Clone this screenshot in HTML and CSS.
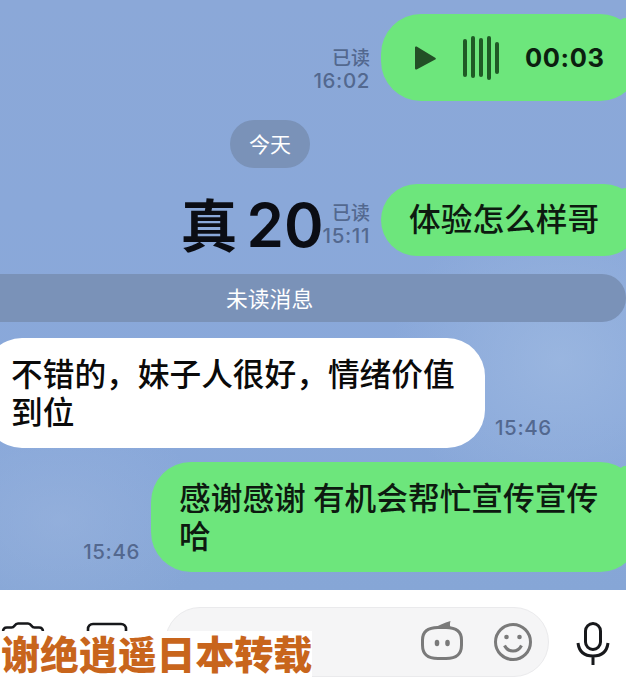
FILE: index.html
```html
<!DOCTYPE html>
<html lang="zh">
<head>
<meta charset="utf-8">
<title>聊天</title>
<link rel="stylesheet" href="styles.css">
</head>
<body>
<div class="screen">
  <main class="chat">
    <div class="row row-out row-voice">
      <div class="meta"><span>已读</span><span>16:02</span></div>
      <div class="bubble bubble-out voice">
        <svg class="play" viewBox="0 0 24 26"><path d="M2 2.500v21c0 1 .8 1.300 1.600.9l18.600-9.900c.9-.5.9-1.300 0-1.800L3.600 1.600C2.800 1.200 2 1.500 2 2.500z"/></svg>
        <svg class="wave" viewBox="0 0 38 44"><rect x="0" y="3" width="4" height="38" rx="2"/><rect x="8" y="0" width="4" height="42" rx="2"/><rect x="16" y="2" width="4" height="39" rx="2"/><rect x="24" y="0" width="4" height="44" rx="2"/><rect x="32" y="6" width="4" height="32" rx="2"/></svg>
        <span class="duration">00:03</span>
      </div>
    </div>
    <div class="date-row"><span class="date-pill">今天</span></div>
    <div class="row row-out row-text">
      <div class="big"><span class="big-cjk">真</span> 20</div>
      <div class="meta meta-overlap"><span>已读</span><span>15:11</span></div>
      <div class="bubble bubble-out single">体验怎么样哥</div>
    </div>
    <div class="unread"><span>未读消息</span></div>
    <div class="row row-in">
      <div class="bubble bubble-in">不错的，妹子人很好，情绪价值到位</div>
      <div class="time">15:46</div>
    </div>
    <div class="row row-out row-long">
      <div class="time">15:46</div>
      <div class="bubble bubble-out long">感谢感谢 有机会帮忙宣传宣传哈</div>
    </div>
  </main>
  <footer class="composer">
    <svg class="tool tool-camera" viewBox="0 0 46 40"><path d="M3 38V10c0-3 1.500-4.500 4-4.500h4.500c1.500 0 2.200-.6 3-1.800C15.500 2.200 16.500 1.500 18 1.500h10c1.500 0 2.500.7 3.500 2.200.8 1.200 1.500 1.800 3 1.800H39c2.500 0 4 1.500 4 4.500v28"/></svg>
    <svg class="tool tool-image" viewBox="0 0 42 40"><path d="M2 38V7c0-3 2-5 5-5h28c3 0 5 2 5 5v31"/></svg>
    <div class="input">
      <svg class="face face-bot" viewBox="0 0 44 42"><path d="M18 7.500h8c11 0 15.500 4.500 15.500 12.500v5c0 9-4.500 13.500-15.500 13.500h-8C7 38.500 2.500 34 2.500 25v-5C2.500 12 7 7.500 18 7.500z"/><path class="fill" d="M14 8C19 5 24 3 30.500 1c-.8 2.500-.8 5 .5 7.500z"/><ellipse class="fill" cx="17" cy="23" rx="2.300" ry="3.300"/><ellipse class="fill" cx="27.500" cy="23" rx="2.300" ry="3.300"/></svg>
      <svg class="face face-smile" viewBox="0 0 40 40"><circle cx="20" cy="20" r="17.500"/><circle class="fill" cx="13.500" cy="15" r="2.300"/><circle class="fill" cx="26.500" cy="15" r="2.300"/><path d="M11.500 23.500c2 4 5 5.500 8.500 5.500s6.500-1.500 8.500-5.500"/></svg>
    </div>
    <svg class="mic" viewBox="0 0 36 44"><rect x="10.500" y="1.500" width="15" height="26" rx="7.500"/><path d="M3 21c1 8 6 13 15 13s14-5 15-13M18 34v9"/></svg>
    <div class="watermark">谢绝逍遥日本转载</div>
  </footer>
</div>
</body>
</html>
```
FILE: styles.css
```css
* { box-sizing: border-box; }
html, body { margin: 0; padding: 0; background: #fff; }
body {
  font-family: Inter, "Noto Sans CJK SC", "Noto Sans", sans-serif;
  overflow: hidden;
}
.screen {
  position: relative;
  width: 626px;
  height: 692px;
  overflow: hidden;
  display: flex;
  flex-direction: column;
}
.chat {
  height: 590px;
  flex: none;
  padding-top: 14px;
  display: flex;
  flex-direction: column;
  background:
    radial-gradient(ellipse 170px 150px at 560px 360px, rgba(160,187,226,.7), transparent),
    radial-gradient(ellipse 150px 110px at 60px 520px, rgba(154,180,222,.6), transparent),
    linear-gradient(180deg, #8ba8d8 0%, #89a8da 70%, #86a6d6 100%);
}
.row { display: flex; align-items: flex-end; }
.row-out { justify-content: flex-end; margin-right: -14px; }
.bubble {
  font-family: "Noto Sans CJK SC", sans-serif;
  font-weight: 500;
  font-size: 31.700px;
  line-height: 38px;
  color: #0d1a10;
}
.bubble-out { background: #6de67c; border-radius: 40px; position: relative; }
.bubble-out::after {
  content: "";
  position: absolute;
  top: 4px;
  right: 14px;
  width: 6px;
  height: 10px;
  background: #6de67c;
  border-radius: 5px 0 0 0;
}
.voice {
  width: 259px;
  height: 87px;
  display: flex;
  align-items: center;
  padding-left: 32px;
}
.play { width: 24px; height: 26px; fill: #234f26; flex: none; }
.wave { width: 38px; height: 44px; fill: #1f5b25; margin-left: 26px; flex: none; }
.duration {
  font-family: Inter, sans-serif;
  font-weight: 700;
  font-size: 25.500px;
  letter-spacing: .6px;
  margin-left: 24px;
  color: #0c1f10;
}
.meta {
  display: flex;
  flex-direction: column;
  align-items: flex-end;
  font-size: 20.500px;
  font-weight: 500;
  letter-spacing: .6px;
  line-height: 24px;
  color: #53688f;
  margin: 0 11px 8px 0;
}
.meta span:first-child { font-family: "Noto Sans CJK SC", sans-serif; font-size: 19px; letter-spacing: 0; }
.date-row { display: flex; justify-content: center; margin: 19px 0 16px; padding-right: 86px; }
.date-pill {
  width: 80px;
  height: 48px;
  border-radius: 24px;
  background: #7a92b8;
  color: #fff;
  font-family: "Noto Sans CJK SC", sans-serif;
  font-size: 21px;
  padding-bottom: 2px;
  display: flex;
  align-items: center;
  justify-content: center;
}
.row-text { height: 72px; align-items: center; }
.big {
  color: #0b0d14;
  font-size: 60px;
  line-height: 72px;
  height: 72px;
  padding-top: 2px;
  font-weight: 600;
  white-space: nowrap;
  word-spacing: -6px;
  margin: 0 -1px 0 0;
}
.big-cjk { font-family: "Noto Sans CJK SC", sans-serif; font-weight: 700; font-size: 57px; }
.single {
  width: 259px;
  height: 72px;
  padding: 14px 0 0 28px;
}
.meta-overlap { align-self: flex-end; margin-bottom: 8px; position: relative; }
.unread {
  margin: 18px 0 16px;
  height: 48px;
  border-radius: 0 24px 24px 0;
  background: #7a92b8;
  color: #fff;
  font-family: "Noto Sans CJK SC", sans-serif;
  font-size: 21.800px;
  padding-left: 226px;
  padding-bottom: 2px;
  display: flex;
  align-items: center;
}
.row-in { margin-left: -16px; }
.bubble-in {
  width: 501px;
  height: 110px;
  background: #fff;
  border-radius: 38px;
  padding: 15px 18px 0 27px;
  color: #0a0a0a;
}
.time {
  font-size: 20.500px;
  font-weight: 500;
  letter-spacing: .6px;
  line-height: 24px;
  color: #53688f;
  padding-bottom: 8px;
}
.row-in .time { margin-left: 10px; }
.row-long { margin-top: 14px; }
.row-long .time { margin-right: 11px; }
.long {
  width: 489px;
  height: 110px;
  padding: 15px 28px 0 28px;
}
.composer {
  flex: 1;
  position: relative;
  background: #fff;
  display: flex;
  align-items: flex-start;
  padding-top: 17px;
}
.tool { fill: none; stroke: #17181b; stroke-width: 2.600; flex: none; margin-top: 15px; }
.tool-camera { width: 46px; height: 40px; }
.tool-image { width: 42px; height: 40px; margin-left: 40px; }
.input {
  width: 384px;
  height: 70px;
  margin-left: 37px;
  border-radius: 35px;
  background: #f5f5f6;
  border: 1px solid #eaeaec;
  display: flex;
  align-items: center;
  justify-content: flex-end;
  gap: 29px;
  padding-right: 15px;
  flex: none;
}
.face { fill: none; stroke: #7a7a7a; stroke-width: 3; flex: none; }
.face .fill { fill: #7a7a7a; stroke: none; }
.face-bot { width: 44px; height: 42px; margin-top: -3px; }
.face-smile { width: 40px; height: 40px; }
.mic {
  width: 36px;
  height: 44px;
  flex: none;
  margin: 15px 0 0 26px;
  fill: none;
  stroke: #17181b;
  stroke-width: 3;
}
.watermark {
  position: absolute;
  left: 0;
  top: 41px;
  width: 312px;
  height: 50px;
  background: #fff;
  color: #c8651c;
  font-family: "Noto Sans CJK SC", sans-serif;
  font-weight: 900;
  font-size: 39px;
  line-height: 42px;
  white-space: nowrap;
  padding-left: 1px;
  letter-spacing: -.1px;
}
```
